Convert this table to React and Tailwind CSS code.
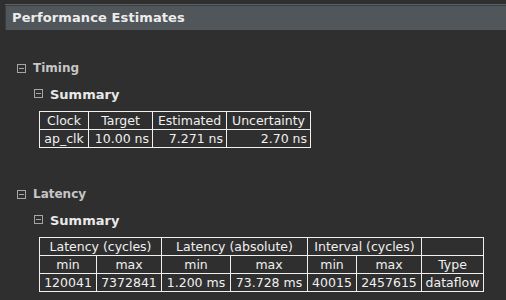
import React from 'react';

function Toggle({ className = '' }) {
  return (
    <svg width="9" height="9" viewBox="0 0 9 9" className={`shrink-0 ${className}`}>
      <rect x="0.5" y="0.5" width="8" height="8" fill="none" stroke="#a6a6a6" />
      <path d="M2 4.5h5" stroke="#a6a6a6" />
    </svg>
  );
}

function Cell({ children, className = '' }) {
  return (
    <div className={`bg-[#2f2f2f] h-[17px] leading-[17px] text-[12.5px] text-[#f0f0f0] whitespace-nowrap overflow-hidden ${className}`}>
      {children}
    </div>
  );
}

export default function App() {
  return (
    <div className="w-[506px] h-[300px] bg-[#2f2f2f] pt-[4px] font-['DejaVu_Sans',sans-serif] overflow-hidden">
      {/* title bar */}
      <div className="ml-[5px] border-t border-[#5c6165]">
        <div className="h-[25px] border-t border-l border-[#3b3e41] bg-[#51565a] pl-[6px] flex items-center">
          <span className="text-[13px] font-bold text-[#ececec] leading-4 tracking-[0.1px]">Performance Estimates</span>
        </div>
      </div>

      {/* Timing */}
      <div className="mt-[30px] h-4 flex items-start pl-[17px] gap-[7px]">
        <Toggle className="mt-[4px]" />
        <span className="text-[12px] font-bold text-[#c6c6c6] leading-4">Timing</span>
      </div>
      <div className="mt-[11px] h-4 flex items-start pl-[34px] gap-[7px]">
        <Toggle className="mt-[2px]" />
        <span className="text-[13px] font-bold text-[#e8e8e8] leading-4">Summary</span>
      </div>

      <div className="mt-[8px] ml-[39px] w-fit grid grid-cols-[48px_63px_73px_83px] gap-px p-px bg-[#f0f0f0]">
        <Cell className="text-center">Clock</Cell>
        <Cell className="text-center">Target</Cell>
        <Cell className="text-center">Estimated</Cell>
        <Cell className="text-center">Uncertainty</Cell>
        <Cell className="text-center">ap_clk</Cell>
        <Cell className="text-right pr-[3px]">10.00 ns</Cell>
        <Cell className="text-right pr-[3px]">7.271 ns</Cell>
        <Cell className="text-right pr-[3px]">2.70 ns</Cell>
      </div>

      {/* Latency */}
      <div className="mt-[38px] h-4 flex items-start pl-[17px] gap-[7px]">
        <Toggle className="mt-[4px]" />
        <span className="text-[12px] font-bold text-[#c6c6c6] leading-4">Latency</span>
      </div>
      <div className="mt-[11px] h-4 flex items-start pl-[34px] gap-[7px]">
        <Toggle className="mt-[2px]" />
        <span className="text-[13px] font-bold text-[#e8e8e8] leading-4">Summary</span>
      </div>

      <div className="mt-[8px] ml-[39px] w-fit grid grid-cols-[56px_64px_68px_76px_48px_64px_61px] gap-px p-px bg-[#f0f0f0]">
        <Cell className="col-span-2 text-center">Latency (cycles)</Cell>
        <Cell className="col-span-2 text-center">Latency (absolute)</Cell>
        <Cell className="col-span-2 text-center">Interval (cycles)</Cell>
        <Cell />
        <Cell className="text-center">min</Cell>
        <Cell className="text-center">max</Cell>
        <Cell className="text-center">min</Cell>
        <Cell className="text-center">max</Cell>
        <Cell className="text-center">min</Cell>
        <Cell className="text-center">max</Cell>
        <Cell className="text-center">Type</Cell>
        <Cell className="text-center">120041</Cell>
        <Cell className="text-center">7372841</Cell>
        <Cell className="text-center">1.200 ms</Cell>
        <Cell className="text-center">73.728 ms</Cell>
        <Cell className="text-center">40015</Cell>
        <Cell className="text-center">2457615</Cell>
        <Cell className="text-center">dataflow</Cell>
      </div>
    </div>
  );
}
